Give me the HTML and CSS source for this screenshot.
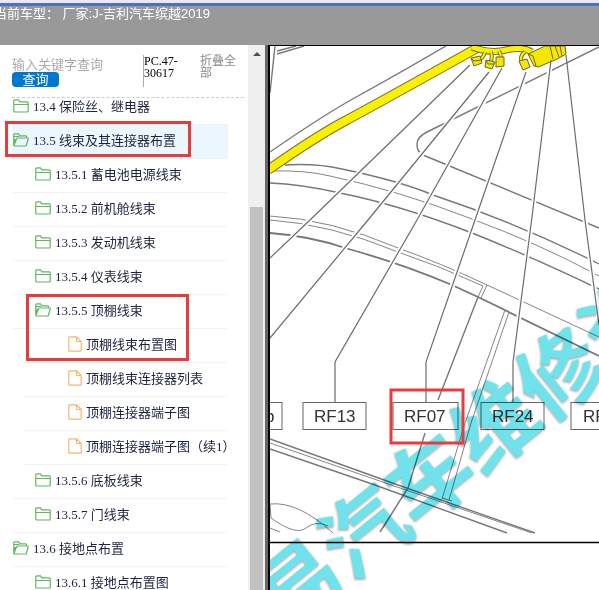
FILE: index.html
```html
<!DOCTYPE html>
<html lang="zh-CN">
<head>
  <meta charset="UTF-8">
  <meta name="viewport" content="width=device-width, initial-scale=1.0">
  <title>J-吉利汽车缤越2019</title>
  <link rel="stylesheet" href="styles.css">
</head>
<body>
  <!-- 图标 -->
  <svg class="symbols" aria-hidden="true">
    <symbol id="folder" viewBox="0 0 16 14">
      <path d="M.8 12V1.8q0-1 1-1h3.6l1.6 2h7.2q1 0 1 1V12q0 1-1 1H1.8q-1 0-1-1zM.8 5.5h14.4"/>
    </symbol>
    <symbol id="folder-open" viewBox="0 0 16 14">
      <path d="M.8 12V1.8q0-1 1-1h3.6l1.6 2h5.6q1 0 1 1V5M1 12.4 3.6 5.800q.3-.8 1.100-.8h9.700q1.100 0 .8 1l-1.700 6q-.3 1-1.300 1H1.800q-1 0-1-1M1.200 3.500h5M1.400 9l1-3"/>
    </symbol>
    <symbol id="file" viewBox="0 0 14 16">
      <path d="M8.500.8H1.800q-1 0-1 1v12.400q0 1 1 1h10.400q1 0 1-1V5.500zM8.500.8v3.700q0 1 1 1h3.700"/>
    </symbol>
  </svg>

  <header class="topbar">
    <p class="car">当前车型： 厂家:J-吉利汽车缤越2019</p>
  </header>

  <div class="layout">
    <aside class="sidebar">
      <form class="search">
        <div class="search-box">
          <input type="text" class="search-input" placeholder="输入关键字查询" aria-label="输入关键字查询">
          <button type="button" class="search-btn">查询</button>
        </div>
        <span class="code">PC.47-30617</span>
        <a class="fold" href="#">折叠全部</a>
      </form>
      <nav class="tree">
        <ul>
          <li><a href="#"><svg class="icon"><use href="#folder"/></svg>13.4 保险丝、继电器</a></li>
          <li class="active"><a href="#"><svg class="icon"><use href="#folder-open"/></svg>13.5 线束及其连接器布置</a></li>
          <li class="lv2"><a href="#"><svg class="icon"><use href="#folder"/></svg>13.5.1 蓄电池电源线束</a></li>
          <li class="lv2"><a href="#"><svg class="icon"><use href="#folder"/></svg>13.5.2 前机舱线束</a></li>
          <li class="lv2"><a href="#"><svg class="icon"><use href="#folder"/></svg>13.5.3 发动机线束</a></li>
          <li class="lv2"><a href="#"><svg class="icon"><use href="#folder"/></svg>13.5.4 仪表线束</a></li>
          <li class="lv2"><a href="#"><svg class="icon"><use href="#folder-open"/></svg>13.5.5 顶棚线束</a></li>
          <li class="lv3"><a href="#"><svg class="icon file"><use href="#file"/></svg>顶棚线束布置图</a></li>
          <li class="lv3"><a href="#"><svg class="icon file"><use href="#file"/></svg>顶棚线束连接器列表</a></li>
          <li class="lv3"><a href="#"><svg class="icon file"><use href="#file"/></svg>顶棚连接器端子图</a></li>
          <li class="lv3"><a href="#"><svg class="icon file"><use href="#file"/></svg>顶棚连接器端子图（续1）</a></li>
          <li class="lv2"><a href="#"><svg class="icon"><use href="#folder"/></svg>13.5.6 底板线束</a></li>
          <li class="lv2"><a href="#"><svg class="icon"><use href="#folder"/></svg>13.5.7 门线束</a></li>
          <li><a href="#"><svg class="icon"><use href="#folder-open"/></svg>13.6 接地点布置</a></li>
          <li class="lv2"><a href="#"><svg class="icon"><use href="#folder"/></svg>13.6.1 接地点布置图</a></li>
        </ul>
      </nav>
      <!-- 红框标注 -->
      <div class="mark mark-section"></div>
      <div class="mark mark-diagram"></div>
    </aside>

    <div class="scrollbar">
      <div class="arrow"></div>
      <div class="thumb"></div>
    </div>
    <div class="splitter"></div>

    <main class="viewer">
      <svg class="diagram" viewBox="270 46 329 544" preserveAspectRatio="xMinYMin slice">
        <!-- 车身轮廓 -->
        <g class="body-line">
          <path d="M275 46 270 93M277 51 296 46M277 54 304 46"/>
          <path d="M270 152 Q325 114 358 96T446 46"/>
          <path d="M599 47 427 132Q417 137 417 144T420 152M423 155 599 228"/>
          <path d="M285 165Q316 163 342 169Q400 181 433 195Q520 224 599 264"/>
          <path class="thin" d="M270 171Q306 170 330 176Q400 191 472 219Q540 244 599 276"/>
          <path d="M270 183Q300 184 340 193Q400 205 472 233Q530 256 599 289"/>
          <path class="thin" d="M270 216Q330 219 398 248Q440 263 485 284L599 337M270 220Q330 224 398 252Q440 266 483 286"/>
          <path class="bold" d="M270 233Q310 236 345 248Q400 263 452 285L478 297 599 356"/>
          <path class="thin" d="M483 286 478 297M487 285 481 298M505 310 465 423 442 499M509 312 471 423 449 500M442 498 452 501"/>
          <path d="M478 297 438 400M425 433 408 488 380 532M408 488 399 502 383 528"/>
          <path d="M270 439 398 485 535 533M270 449 375 485 507 533"/>
          <path class="thin" d="M270 443 400 488 532 533M270 504Q298 501 333 533M270 504 271 518Q296 536 306 528T328 526M270 528 280 532"/>
        </g>

        <!-- 顶棚线束 -->
        <path class="wire-edge" d="M268 170Q315 137 345 121T479 47"/>
        <path class="wire" d="M268 170Q315 137 345 121T479 47"/>
        <path class="wire-edge slim" d="M472 47Q490 54 506 50T532 52"/>
        <path class="wire slim" d="M472 47Q490 54 506 50T532 52"/>
        <path class="branch-edge" d="M485 52Q483 59 478 60M491 52Q493 58 490 63M499 51Q502 56 500 61M525 52Q519 56 522 63"/>
        <path class="branch" d="M485 52Q483 59 478 60M491 52Q493 58 490 63M499 51Q502 56 500 61M525 52Q519 56 522 63"/>
        <g class="plug">
          <path d="M471 58 480 56 482 63 474 66zM486 60 495 62 492 69 485 67zM496 57 504 57 504 66 496 67zM519 61 527 59 530 67 523 70zM528 54 545 46 565 46 566 54 559 58 555 60 538 67 534 66z"/>
          <path d="M471 58 474 61 482 60M486 60 488 64 494 64M528 54 533 56 536 66M550 46 553 59M555 46 559 57M560 46 562 56"/>
        </g>

        <!-- 引线 -->
        <g class="leader-gap">
          <path d="M467 69 310 220 270 258M487 75 368 220 270 338M501 71 417 220 335 362M525 76 475 220 426 362M550 65 532 217 513 362M567 64 585 220 599 325"/>
        </g>
        <g class="leader">
          <path d="M470 65 310 220 270 258M489 72 368 220 270 338M502 68 417 220 335 362V402M526 72 475 220 426 362V402M551 60 532 217 513 362V402M566 55 585 220 599 325"/>
        </g>

        <!-- 连接器编号 -->
        <g class="tag">
          <rect x="219" y="402.500" width="63" height="27"/>
          <rect x="303" y="402.500" width="63" height="27"/>
          <rect x="393" y="402.500" width="65" height="27"/>
          <rect x="481" y="402.500" width="63" height="27"/>
          <rect x="571" y="402.500" width="63" height="27"/>
          <text x="265" y="422">b</text>
          <text x="314" y="422">RF13</text>
          <text x="404" y="422">RF07</text>
          <text x="492" y="422">RF24</text>
          <text x="583" y="422">RF</text>
        </g>
        <path class="frame" d="M270 542.500H900"/>

        <text class="watermark" transform="translate(462 452) rotate(-39)" y="31">易汽车维修资</text>
        <rect class="mark-rf07" x="391" y="390" width="72" height="53"/>
      </svg>
    </main>
  </div>
</body>
</html>
```

FILE: styles.css
```css
* {
  margin: 0;
  padding: 0;
  box-sizing: border-box;
}

body {
  display: flex;
  flex-direction: column;
  height: 100vh;
  overflow: hidden;
  background-color: #fff;
  font-family: "Liberation Serif", "Noto Sans CJK SC", serif;
  font-size: 13px;
}

.symbols {
  display: none;
}

.topbar {
  flex: none;
  height: 45px;
  border-top: 3px solid #e6ebfa;
  background-color: #999;
  box-shadow: inset 0 3px 0 #4a72c0;
  color: #fff;
  font-family: "Liberation Sans", "Noto Sans CJK SC", sans-serif;
  overflow: hidden;
}

.car {
  margin-left: -6px;
  padding-top: 3px;
  line-height: 16px;
  white-space: nowrap;
}

.layout {
  flex: 1;
  display: flex;
  min-height: 0;
}

.sidebar {
  position: relative;
  flex: none;
  display: flex;
  flex-direction: column;
  width: 248px;
}

/* 搜索区 */
.search {
  flex: none;
  display: flex;
  align-items: flex-start;
  margin: 0 4px 0 12px;
  padding: 10px 0;
  border-bottom: 1px dashed #ccc;
}

.search-box {
  display: flex;
  flex-direction: column;
  align-items: flex-start;
  width: 131px;
  padding-top: 2px;
}

.search-input {
  width: 100%;
  height: 15px;
  border: 0;
  outline: 0;
  font: inherit;
}

.search-input::placeholder {
  color: #aaa;
}

.search-btn {
  width: 47px;
  height: 15px;
  border: 0;
  border-radius: 4px;
  background-color: #0078d0;
  color: #fff;
  font: inherit;
  line-height: 15px;
}

.code {
  width: 57px;
  height: 32px;
  padding-right: 16px;
  border-left: 1px solid #aaa;
  font-size: 12px;
  line-height: 12px;
}

.fold {
  width: 40px;
  color: #888;
  font-size: 12px;
  line-height: 12px;
  text-decoration: none;
}

/* 目录树 */
.tree {
  flex: 1;
  min-height: 0;
  overflow: hidden;
}

.tree ul {
  margin: -7px 20px 0 12px;
  list-style: none;
}

.tree li {
  height: 34px;
  border-bottom: 1px solid #f3f3f3;
}

.tree a {
  display: flex;
  align-items: center;
  gap: 4px;
  height: 28px;
  padding-left: 1px;
  color: #1c2340;
  text-decoration: none;
  white-space: nowrap;
}

.tree .active {
  background-color: #ebf6ff;
}

.tree .lv2 {
  padding-left: 22px;
}

.tree .lv3 {
  margin-left: 12px;
  padding-left: 43px;
}

.icon {
  flex: none;
  width: 16px;
  height: 14px;
  margin-top: 2px;
  fill: none;
  stroke: #5cb85c;
  stroke-width: 1.2;
}

.icon.file {
  width: 14px;
  height: 16px;
  stroke: #f5b570;
}

.mark {
  position: absolute;
  border: 3px solid #e63c3c;
  pointer-events: none;
}

.mark-section {
  top: 76px;
  left: 5px;
  width: 186px;
  height: 36px;
}

.mark-diagram {
  top: 249px;
  left: 26px;
  width: 163px;
  height: 67px;
}

/* 滚动条 */
.scrollbar {
  flex: none;
  display: flex;
  flex-direction: column;
  align-items: center;
  width: 17px;
  background-color: #f0f0f0;
}

.arrow {
  margin: 7px 0 151px;
  border: 4px solid transparent;
  border-top: 0;
  border-bottom-color: #505050;
}

.thumb {
  flex: 1;
  width: 13px;
  background-color: #c1c1c1;
}

.splitter {
  flex: none;
  width: 5px;
  border-right: 2px solid #000;
  background-color: #666;
}

/* 线束图 */
.viewer {
  flex: 1;
  min-width: 0;
  border-top: 1px solid #000;
}

.diagram {
  display: block;
  width: 100%;
  height: 100%;
  fill: none;
}

.body-line {
  stroke: #77777b;
  stroke-width: 1.4;
}

.body-line .thin {
  stroke: #858588;
  stroke-width: 1;
}

.body-line .bold {
  stroke-width: 1.8;
}

.wire-edge {
  stroke: #77702a;
  stroke-width: 10;
}

.wire {
  stroke: #fbf000;
  stroke-width: 8;
}

.wire-edge.slim {
  stroke-width: 7;
}

.wire.slim {
  stroke-width: 5;
}

.branch-edge {
  stroke: #77702a;
  stroke-width: 4;
}

.branch {
  stroke: #fbf000;
  stroke-width: 2;
}

.plug {
  fill: #f5e800;
  stroke: #6b6520;
  stroke-width: 1;
}

.plug path + path {
  fill: none;
}

.leader-gap {
  stroke: #fff;
  stroke-width: 5;
}

.leader {
  stroke: #6c6c6e;
  stroke-width: 1.2;
}

.tag rect {
  fill: #fff;
  stroke: #666;
}

.tag text {
  fill: #333;
  font-family: "Liberation Sans", sans-serif;
  font-size: 17px;
}

.frame {
  stroke: #000;
  stroke-width: 1.5;
}

.watermark {
  fill: #70e2ec;
  font-family: "Noto Sans CJK SC", sans-serif;
  font-size: 84px;
  font-weight: bold;
  text-anchor: middle;
  mix-blend-mode: multiply;
  filter: drop-shadow(-1px 1px 1px rgba(120, 90, 80, 0.6));
}

.mark-rf07 {
  stroke: #e63c3c;
  stroke-width: 3;
}
```
